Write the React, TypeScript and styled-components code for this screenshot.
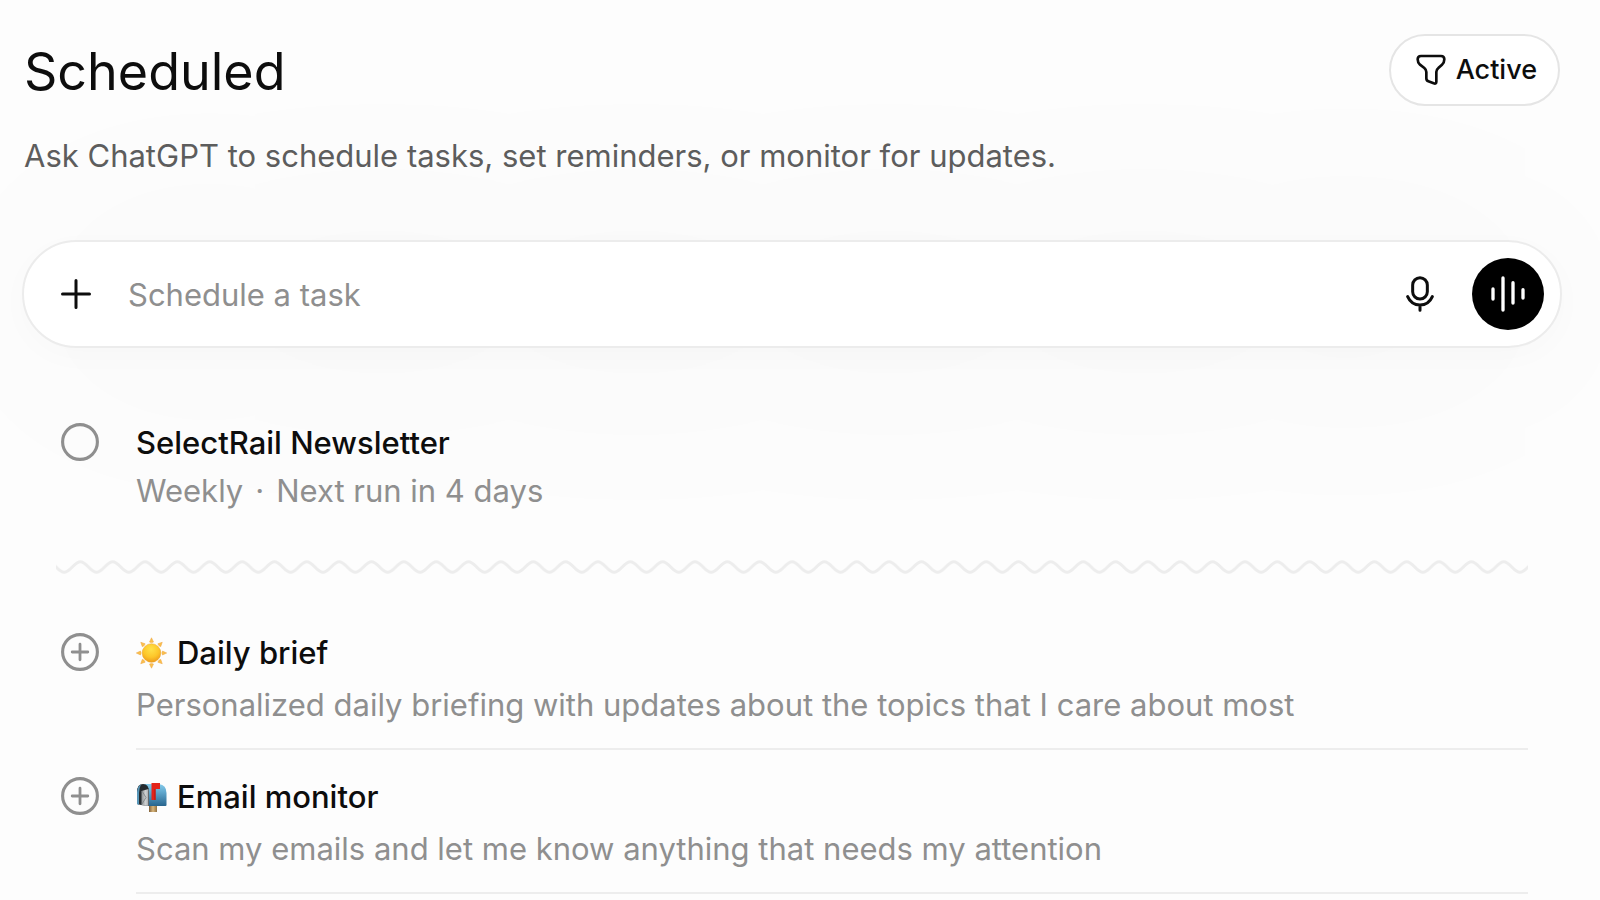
import React from "react";
import styled, { createGlobalStyle } from "styled-components";

const GlobalStyle = createGlobalStyle`
  *, *::before, *::after { box-sizing: border-box; }
  body {
    margin: 0;
    overflow-x: hidden;
    background: #fdfdfd;
    color: #0d0d0d;
    font-family: Inter, "Liberation Sans", sans-serif;
    font-size: 31px;
    line-height: 48px;
  }
  button, input { font: inherit; color: inherit; }
  button { border: 0; padding: 0; background: none; cursor: pointer; }
  h1, h2, p, ul { margin: 0; padding: 0; font-weight: 400; }
`;

const Page = styled.main`
  padding: 34px 38px 0 22px;
`;

const Header = styled.header`
  display: flex;
  justify-content: space-between;
  align-items: center;
  height: 72px;
  padding: 0 2px;
`;

const Title = styled.h1`
  padding-top: 4px;
  font-size: 52px;
  line-height: 72px;
`;

const FilterButton = styled.button`
  display: flex;
  align-items: center;
  gap: 10px;
  height: 72px;
  padding: 0 21px 0 25px;
  border: 2px solid #e5e5e5;
  border-radius: 36px;
  background: #fff;
  font-size: 27px;
  font-weight: 500;
`;

const Subtitle = styled.p`
  margin-top: 26px;
  padding-left: 2px;
  color: #5d5d5d;
`;

const Composer = styled.form`
  display: flex;
  align-items: center;
  height: 108px;
  margin-top: 60px;
  padding: 0 16px 0 30px;
  border: 2px solid #ececec;
  border-radius: 54px;
  background: #fff;
  background-clip: padding-box;
  box-shadow: 0 8px 32px rgba(0, 0, 0, 0.02), 0 8px 240px rgba(0, 0, 0, 0.04);
`;

const IconButton = styled.button`
  display: grid;
  place-items: center;
  flex: none;
  width: 44px;
  height: 72px;
`;

const VoiceButton = styled(IconButton)`
  width: 72px;
  margin-left: 30px;
  border-radius: 50%;
  background: #000;
`;

const TaskInput = styled.input`
  flex: 1;
  min-width: 0;
  height: 72px;
  margin: 0 16px 0 30px;
  padding: 0;
  border: 0;
  outline: 0;
  background: none;
  &::placeholder { color: #8f8f8f; opacity: 1; }
`;

const Content = styled.section`
  position: relative;
  padding: 0 34px;
`;

const Task = styled.article`
  display: flex;
  gap: 36px;
  padding: 71px 0 0 4px;
`;

const Suggestion = styled.li`
  display: flex;
  gap: 36px;
  padding-left: 4px;
`;

const StatusButton = styled.button`
  display: grid;
  place-items: center;
  align-self: flex-start;
  flex: none;
  width: 40px;
  height: 46px;
  color: #8f8f8f;
`;

const SuggestionStatus = styled(StatusButton)`
  margin-top: 23px;
`;

const SuggestionBody = styled.div`
  flex: 1;
  padding: 23px 0 19px;
  border-bottom: 2px solid #ededed;
`;

const Name = styled.h2`
  display: flex;
  align-items: center;
  gap: 10px;
  font-size: 31px;
  font-weight: 500;
`;

const Detail = styled.p<{ $spaced?: boolean }>`
  margin-top: ${(p) => (p.$spaced ? 4 : 0)}px;
  color: #8f8f8f;
`;

const Dot = styled.span`
  margin: 0 12px;
`;

const Wave = styled.svg`
  display: block;
  width: 100%;
  height: 20px;
  margin: 42px 0 29px;
`;

const List = styled.ul`
  list-style: none;
`;

const FilterIcon = () => (
  <svg width="30" height="32" viewBox="0 0 90 96" fill="none" stroke="currentColor" strokeWidth="8" strokeLinejoin="round" aria-hidden="true">
    <path d="M15 6H75Q85 6 85 16Q85 26 78 32L67 42Q61 47 61 54V83Q61 91 53 88L37 82Q31 80 31 73V54Q31 47 25 42L12 32Q5 26 5 16Q5 6 15 6Z" />
  </svg>
);

const PlusIcon = () => (
  <svg width="30" height="30" viewBox="0 0 30 30" fill="none" stroke="currentColor" strokeWidth="3" strokeLinecap="round" aria-hidden="true">
    <path d="M15 1.5V28.5M1.5 15H28.5" />
  </svg>
);

const MicIcon = () => (
  <svg width="28" height="36" viewBox="0 0 84 108" fill="none" stroke="currentColor" strokeWidth="9" strokeLinecap="round" aria-hidden="true">
    <rect x="20" y="5" width="44" height="64" rx="22" />
    <path d="M5 62C12 78 25 87 42 87S72 78 79 62M42 88V103" />
  </svg>
);

const VoiceIcon = () => (
  <svg width="34" height="36" viewBox="0 0 102 108" fill="none" stroke="#fff" strokeWidth="10" strokeLinecap="round" aria-hidden="true">
    <path d="M6 39V69M36 6V102M66 20V81M96 41V66" />
  </svg>
);

const CircleIcon = ({ plus }: { plus?: boolean }) => (
  <svg width="38" height="38" viewBox="0 0 38 38" fill="none" stroke="currentColor" strokeLinecap="round" aria-hidden="true">
    <circle cx="19" cy="19" r="17.4" strokeWidth="3.1" />
    {plus && <path d="M19 11.2V26.8M11.2 19H26.8" strokeWidth="2.8" />}
  </svg>
);

const SunIcon = () => (
  <svg width="31" height="32" viewBox="0 0 31 32" aria-hidden="true">
    <defs>
      <radialGradient id="sun-disc" cx=".48" cy=".3" r=".7">
        <stop offset="0" stopColor="#ffe14a" />
        <stop offset=".6" stopColor="#fdc62a" />
        <stop offset="1" stopColor="#ee9b1c" />
      </radialGradient>
    </defs>
    {[0, 45, 90, 135, 180, 225, 270, 315].map((angle) => (
      <path
        key={angle}
        d="M15.5 .8L17.5 5Q15.5 6.2 13.5 5Z"
        fill="#fbc04b"
        stroke="#eda544"
        strokeWidth=".5"
        transform={`rotate(${angle} 15.5 16)`}
      />
    ))}
    <circle cx="15.5" cy="16" r="9.3" fill="url(#sun-disc)" stroke="#eba52b" strokeWidth=".5" />
  </svg>
);

const MailboxIcon = () => (
  <svg width="31" height="32" viewBox="0 0 31 32" aria-hidden="true">
    <defs>
      <linearGradient id="box-side" x1="0" y1="0" x2="0" y2="1">
        <stop offset="0" stopColor="#86cbea" />
        <stop offset=".35" stopColor="#62a9cf" />
        <stop offset="1" stopColor="#28658e" />
      </linearGradient>
      <linearGradient id="box-post" x1="0" y1="0" x2="1" y2="0">
        <stop offset="0" stopColor="#806039" />
        <stop offset=".5" stopColor="#d9b67c" />
        <stop offset="1" stopColor="#90703f" />
      </linearGradient>
      <linearGradient id="box-door" x1="0" y1="0" x2="1" y2="0">
        <stop offset="0" stopColor="#8d9294" />
        <stop offset=".6" stopColor="#d0d2d3" />
        <stop offset="1" stopColor="#a4a8aa" />
      </linearGradient>
    </defs>
    <path d="M13 22H21V31H13Z" fill="url(#box-post)" />
    <path d="M7 3H23Q30.5 4 30.5 12V24Q30.5 25 29.5 25H12Z" fill="url(#box-side)" />
    <path d="M1 23V11Q1 3 7 3Q13 3 13 11V25L5 24Z" fill="#252a2e" />
    <path d="M1 23V11Q1.5 5 5 3.4Q3 7 3 12V24Z" fill="#5796b8" />
    <path d="M5.5 10L12.5 8V25L5.5 24Z" fill="url(#box-door)" />
    <path d="M6 10L10 16.5L6 23" fill="none" stroke="#777d80" strokeWidth=".8" />
    <path d="M15.5 2H24V8H19.5V19H15.5Z" fill="#e32219" />
    <path d="M18.5 8H19.5V19H18.5Z" fill="#b5160f" />
  </svg>
);

const WaveDivider = () => (
  <Wave aria-hidden="true">
    <defs>
      <pattern id="wave" x="8.2" width="32.35" height="20" patternUnits="userSpaceOnUse">
        <path
          d="M-16.17 4.7C-10 4.7 -6.17 15.3 0 15.3S10 4.7 16.17 4.7S26.17 15.3 32.35 15.3S42.35 4.7 48.5 4.7"
          fill="none"
          stroke="#ededed"
          strokeWidth="3"
        />
      </pattern>
    </defs>
    <rect width="100%" height="20" fill="url(#wave)" />
  </Wave>
);

const suggestions = [
  {
    icon: <SunIcon />,
    name: "Daily brief",
    detail: "Personalized daily briefing with updates about the topics that I care about most",
  },
  {
    icon: <MailboxIcon />,
    name: "Email monitor",
    detail: "Scan my emails and let me know anything that needs my attention",
  },
];

export default function App() {
  return (
    <>
      <GlobalStyle />
      <Page>
        <Header>
          <Title>Scheduled</Title>
          <FilterButton type="button">
            <FilterIcon />
            Active
          </FilterButton>
        </Header>
        <Subtitle>Ask ChatGPT to schedule tasks, set reminders, or monitor for updates.</Subtitle>
        <Composer onSubmit={(e) => e.preventDefault()}>
          <IconButton type="button" aria-label="Add">
            <PlusIcon />
          </IconButton>
          <TaskInput type="text" aria-label="Schedule a task" placeholder="Schedule a task" />
          <IconButton type="button" aria-label="Dictate">
            <MicIcon />
          </IconButton>
          <VoiceButton type="button" aria-label="Use voice">
            <VoiceIcon />
          </VoiceButton>
        </Composer>
        <Content>
          <Task>
            <StatusButton type="button" aria-label="Mark complete">
              <CircleIcon />
            </StatusButton>
            <div>
              <Name>SelectRail Newsletter</Name>
              <Detail>
                Weekly<Dot>·</Dot>Next run in 4 days
              </Detail>
            </div>
          </Task>
          <WaveDivider />
          <List>
            {suggestions.map((s) => (
              <Suggestion key={s.name}>
                <SuggestionStatus type="button" aria-label={`Add ${s.name}`}>
                  <CircleIcon plus />
                </SuggestionStatus>
                <SuggestionBody>
                  <Name>
                    {s.icon}
                    {s.name}
                  </Name>
                  <Detail $spaced>{s.detail}</Detail>
                </SuggestionBody>
              </Suggestion>
            ))}
          </List>
        </Content>
      </Page>
    </>
  );
}
